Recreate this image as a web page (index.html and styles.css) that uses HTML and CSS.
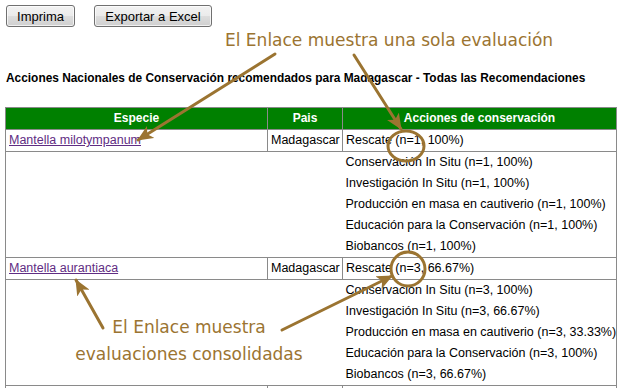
FILE: index.html
```html
<!DOCTYPE html>
<html lang="es">
<head>
<meta charset="utf-8">
<title>Acciones Nacionales de Conservación</title>
<link rel="stylesheet" href="styles.css">
</head>
<body>
<div class="page">
  <div class="toolbar">
    <button class="btn btn-print" type="button">Imprima</button>
    <button class="btn btn-export" type="button">Exportar a Excel</button>
  </div>
  <h1 class="title">Acciones Nacionales de Conservación recomendados para Madagascar - Todas las Recomendaciones</h1>
  <table class="grid">
    <colgroup>
      <col class="c-esp">
      <col class="c-pais">
      <col class="c-acc">
    </colgroup>
    <thead>
      <tr><th>Especie</th><th>Pais</th><th>Acciones de conservación</th></tr>
    </thead>
    <tbody>
      <tr>
        <td><a href="#" class="sp">Mantella milotympanum</a></td>
        <td>Madagascar</td>
        <td>Rescate (n=1, 100%)</td>
      </tr>
      <tr class="more">
        <td colspan="2" class="blank"></td>
        <td class="list">
          <div>Conservación In Situ (n=1, 100%)</div>
          <div>Investigación In Situ (n=1, 100%)</div>
          <div>Producción en masa en cautiverio (n=1, 100%)</div>
          <div>Educación para la Conservación (n=1, 100%)</div>
          <div>Biobancos (n=1, 100%)</div>
        </td>
      </tr>
      <tr>
        <td><a href="#" class="sp">Mantella aurantiaca</a></td>
        <td>Madagascar</td>
        <td>Rescate (n=3, 66.67%)</td>
      </tr>
      <tr class="more">
        <td colspan="2" class="blank"></td>
        <td class="list">
          <div>Conservación In Situ (n=3, 100%)</div>
          <div>Investigación In Situ (n=3, 66.67%)</div>
          <div>Producción en masa en cautiverio (n=3, 33.33%)</div>
          <div>Educación para la Conservación (n=3, 100%)</div>
          <div>Biobancos (n=3, 66.67%)</div>
        </td>
      </tr>
      <tr>
        <td>&nbsp;</td>
        <td>&nbsp;</td>
        <td>&nbsp;</td>
      </tr>
    </tbody>
  </table>

  <svg class="overlay" width="619" height="388" viewBox="0 0 619 388" aria-hidden="true">
    <defs>
      <marker id="head" markerUnits="userSpaceOnUse" markerWidth="18" markerHeight="14" refX="15" refY="7" orient="auto">
        <path d="M0,0 L16,7 L0,14 L4,7 Z" fill="#9b7431"/>
      </marker>
    </defs>
    <g stroke="#9b7431" stroke-width="3" fill="none" stroke-linecap="round">
      <line x1="275" y1="54" x2="138" y2="140" marker-end="url(#head)"/>
      <line x1="354" y1="55" x2="401" y2="129" marker-end="url(#head)"/>
      <line x1="103" y1="328" x2="76" y2="280" marker-end="url(#head)"/>
      <line x1="282" y1="330" x2="392" y2="276" marker-end="url(#head)"/>
      <ellipse cx="406" cy="146" rx="18" ry="15"/>
      <ellipse cx="408" cy="269" rx="17" ry="17"/>
    </g>
  </svg>
  <div class="note note-one">El Enlace muestra una sola evaluación</div>
  <div class="note note-two">El Enlace muestra<br>evaluaciones consolidadas</div>
</div>
</body>
</html>
```

FILE: styles.css
```css
html, body {
  margin: 0;
  padding: 0;
  background: #ffffff;
}
body {
  font-family: Arial, "Liberation Sans", sans-serif;
  font-size: 13px;
  color: #000;
  overflow: hidden;
}
.page {
  position: relative;
  width: 619px;
  height: 388px;
  overflow: hidden;
}
.toolbar {
  display: flex;
  gap: 19px;
  padding: 5px 0 0 6px;
}
.btn {
  height: 22px;
  padding: 0 8px;
  font-family: Arial, "Liberation Sans", sans-serif;
  font-size: 13px;
  color: #000;
  border: 1px solid #707070;
  border-radius: 3px;
  background: linear-gradient(#f2f2f2 0%, #ebebeb 48%, #dddddd 52%, #cfcfcf 100%);
  box-shadow: inset 0 0 0 1px rgba(255,255,255,0.7);
}
.btn-print { width: 69px; }
.btn-export { width: 118px; }
.title {
  margin: 44px 0 0 6px;
  font-size: 11.9px;
  line-height: 14px;
  font-weight: bold;
}
.grid {
  margin: 22px 0 0 5px;
  width: 611px;
  border-collapse: collapse;
  table-layout: fixed;
}
.c-esp { width: 262px; }
.c-pais { width: 75px; }
.c-acc { width: 274px; }
.grid th,
.grid td {
  border: 1px solid #8a8a8a;
  height: 21px;
  padding: 0 3px;
  line-height: 21px;
  white-space: nowrap;
  vertical-align: middle;
}
.grid th {
  background: #008000;
  color: #fff;
  font-size: 12px;
  font-weight: bold;
  text-align: center;
}
.grid td {
  font-size: 12.5px;
}
.grid .more .blank {
  border-right: none;
}
.grid .more .list {
  border-left: none;
  padding: 0 3px;
}
.list div {
  height: 21px;
  line-height: 21px;
}
.sp {
  color: #5f2d83;
  text-decoration: underline;
}
.overlay {
  position: absolute;
  left: 0;
  top: 0;
  pointer-events: none;
}
.note {
  position: absolute;
  font-family: "Comic Sans MS", "DejaVu Sans", sans-serif;
  color: #9b7431;
  font-size: 17px;
  white-space: nowrap;
}
.note-one {
  left: 225px;
  top: 30px;
}
.note-two {
  left: 70px;
  top: 314px;
  width: 238px;
  text-align: center;
  line-height: 27px;
}
```
